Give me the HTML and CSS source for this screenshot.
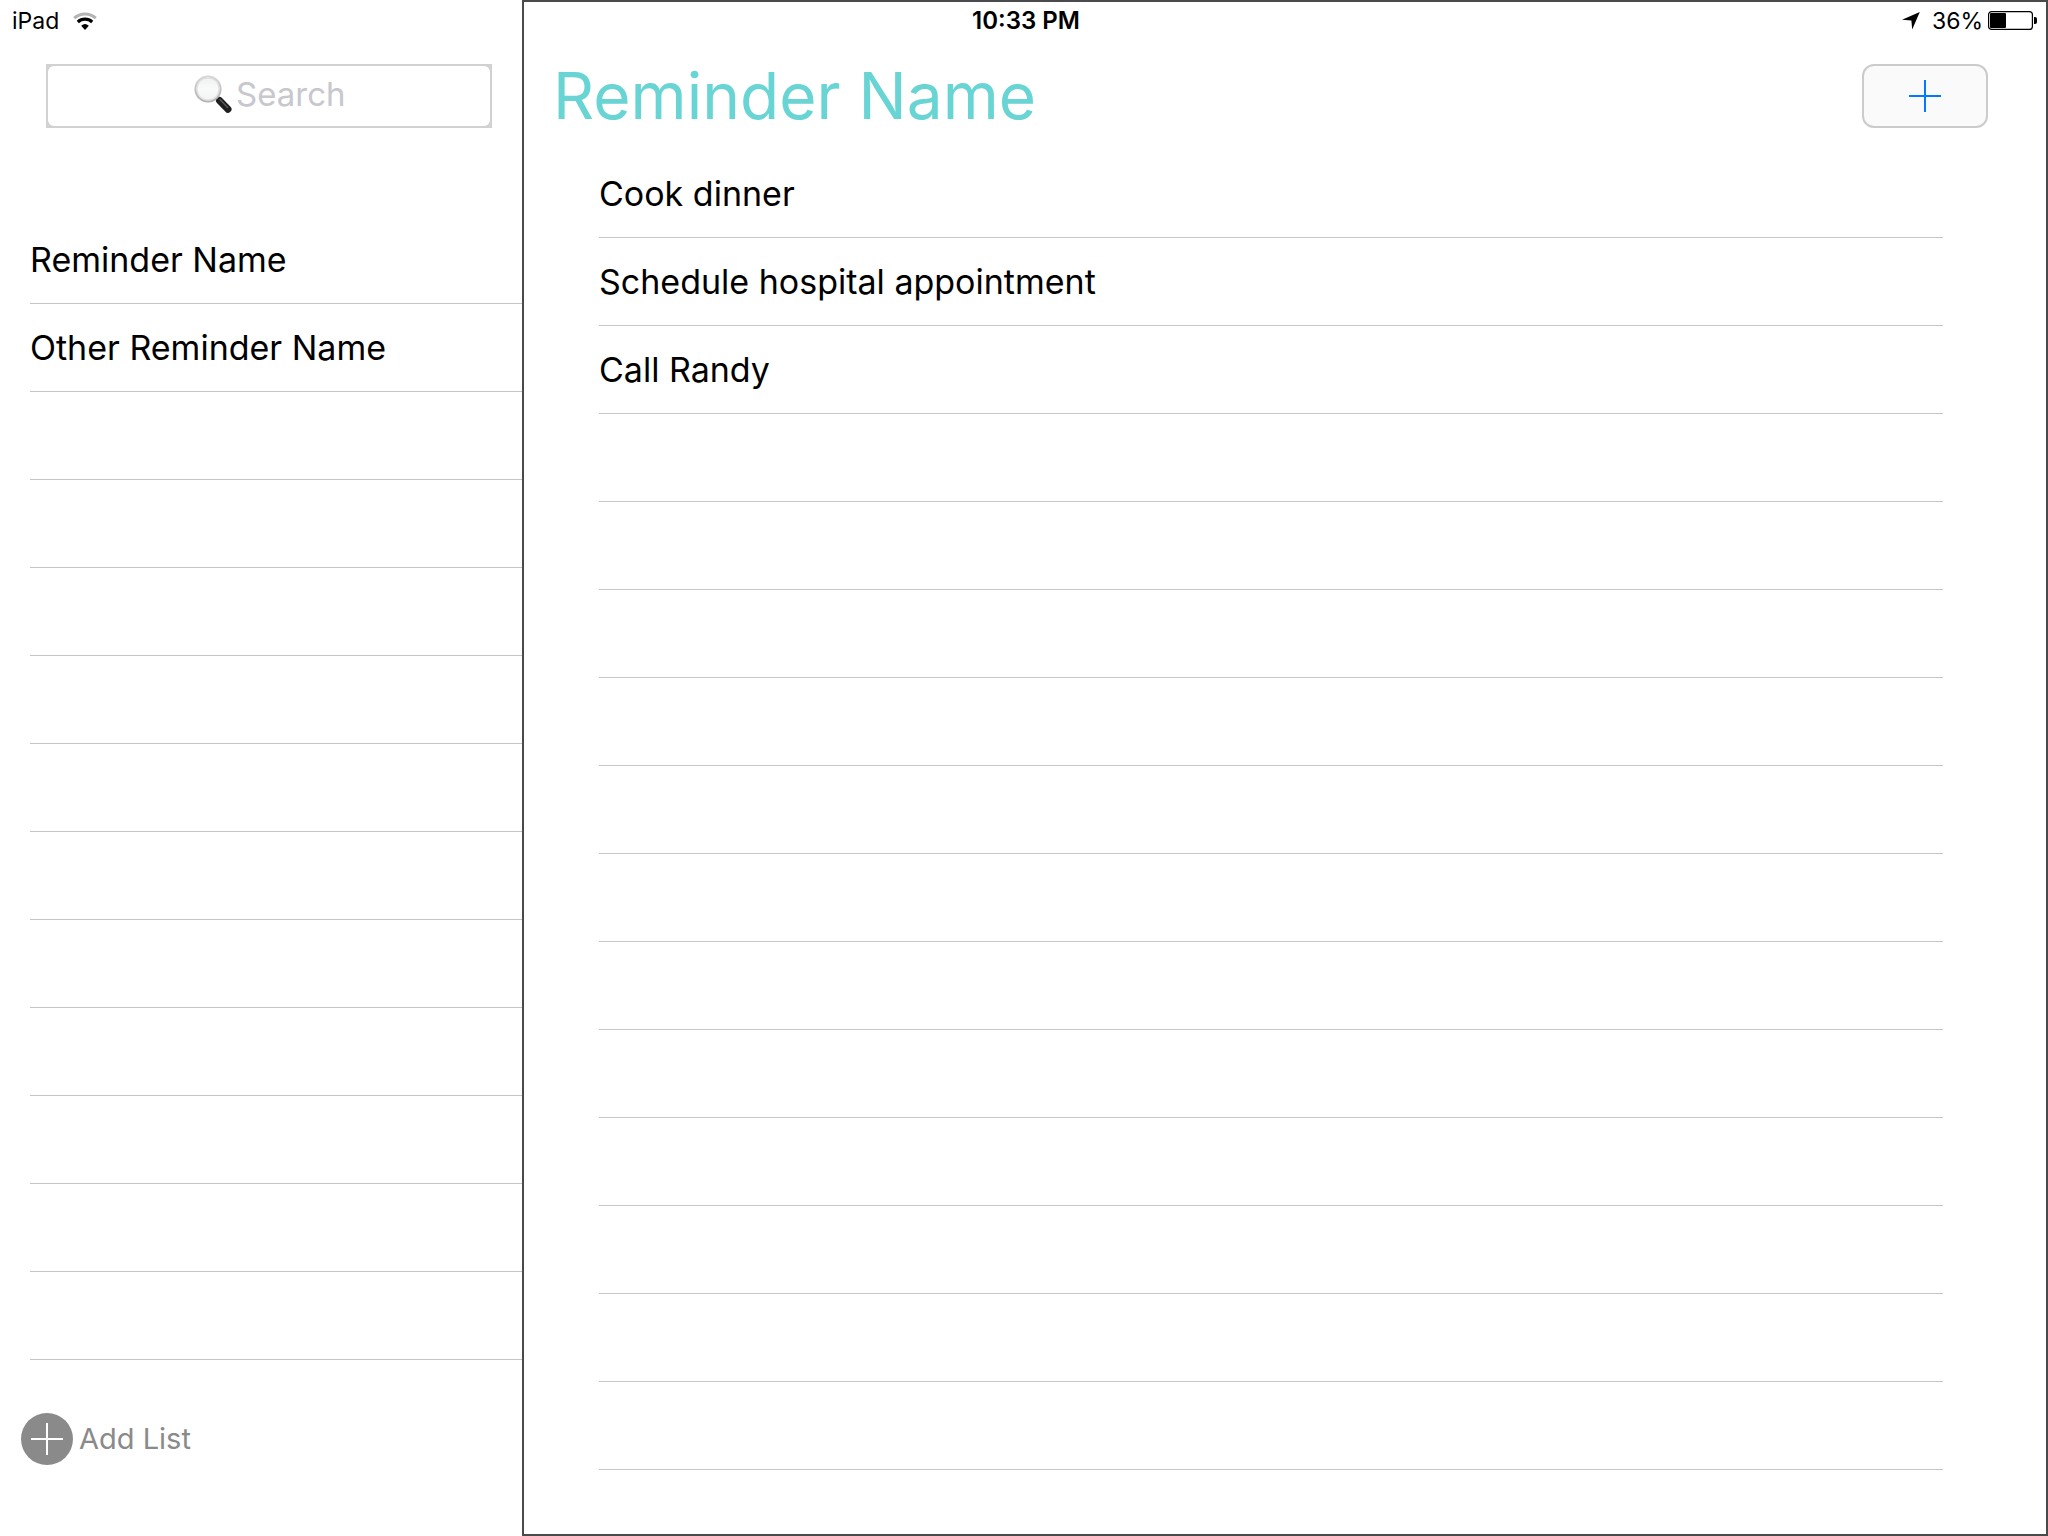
FILE: index.html
```html
<!DOCTYPE html>
<html lang="en">
<head>
<meta charset="utf-8">
<meta name="viewport" content="width=device-width, initial-scale=1">
<title>Reminders</title>
<link rel="stylesheet" href="styles.css">
</head>
<body class="app">
  <header class="status">
    <div class="status-left">
      <span>iPad</span>
      <svg class="wifi" width="24" height="18" viewBox="0 0 24 18" aria-hidden="true">
        <path d="M1.2 6.2A16 16 0 0 1 22.8 6.2" fill="none" stroke="#b4b4b4" stroke-width="3"/>
        <path d="M4.8 10A10.7 10.7 0 0 1 19.2 10" fill="none" stroke="#000" stroke-width="3.2"/>
        <path d="M12 18L8.2 13.7A5.7 5.7 0 0 1 15.8 13.7Z"/>
      </svg>
    </div>
    <time class="clock">10:33 PM</time>
    <div class="status-right">
      <svg class="arrow" width="18" height="18" viewBox="0 0 18 18" aria-hidden="true">
        <path d="M17.8 0L10.2 17.6L9.4 8.6L0 7.7Z"/>
      </svg>
      <span>36%</span>
      <svg class="battery" width="49" height="19" viewBox="0 0 49 19" aria-hidden="true">
        <rect x=".6" y=".6" width="43.8" height="17.8" rx="3" fill="none" stroke="#000" stroke-width="1.2"/>
        <rect x="2" y="2" width="16" height="15" rx="1"/>
        <path d="M46 6h1q2 0 2 2v3q0 2-2 2h-1z"/>
      </svg>
    </div>
  </header>

  <aside class="sidebar">
    <div class="search">
      <label class="search-field">
        <svg class="lens" width="38" height="38" viewBox="0 0 38 38" aria-hidden="true">
          <defs>
            <linearGradient id="glass" x1="0" y1="0" x2="0" y2="1">
              <stop offset="0" stop-color="#eeefef"/><stop offset=".5" stop-color="#f9fafa"/><stop offset="1" stop-color="#f1f3f3"/>
            </linearGradient>
            <linearGradient id="rim" x1="0" y1="0" x2="0" y2="1">
              <stop offset="0" stop-color="#d6d6d6"/><stop offset="1" stop-color="#b2b2b2"/>
            </linearGradient>
          </defs>
          <path d="M22 22L26 26" stroke="#8c8c8c" stroke-width="3"/>
          <path d="M25.5 25.5L34 34.3" stroke="#1f1f1f" stroke-width="7" stroke-linecap="round"/>
          <path d="M26 24.6L33.6 32.6" stroke="#5c5c5c" stroke-width="1.4" stroke-linecap="round"/>
          <circle cx="14" cy="14" r="12.6" fill="url(#glass)" stroke="url(#rim)" stroke-width="2"/>
          <circle cx="14" cy="14" r="11" fill="none" stroke="#dedede" stroke-width="1"/>
        </svg>
        <input class="search-input" type="text" placeholder="Search" aria-label="Search">
      </label>
    </div>
    <ul class="list">
      <li class="row">Reminder Name</li>
      <li class="row">Other Reminder Name</li>
      <li class="row"></li><li class="row"></li><li class="row"></li><li class="row"></li>
      <li class="row"></li><li class="row"></li><li class="row"></li><li class="row"></li>
      <li class="row"></li><li class="row"></li><li class="row"></li>
    </ul>
    <button class="add-list" type="button">
      <svg width="52" height="52" viewBox="0 0 52 52" aria-hidden="true">
        <circle cx="26" cy="26" r="26" fill="#8a8a8a"/>
        <path d="M26 10V42M10 26H42" stroke="#fff" stroke-width="2"/>
      </svg>
      <span>Add List</span>
    </button>
  </aside>

  <main class="panel">
    <div class="panel-head">
      <h1 class="title">Reminder Name</h1>
      <button class="add-item" type="button" aria-label="Add reminder">
        <svg width="32" height="32" viewBox="0 0 32 32" aria-hidden="true">
          <path d="M16 0V32M0 16H32" stroke="#007aff" stroke-width="2"/>
        </svg>
      </button>
    </div>
    <ul class="list items">
      <li class="row">Cook dinner</li>
      <li class="row">Schedule hospital appointment</li>
      <li class="row">Call Randy</li>
      <li class="row"></li><li class="row"></li><li class="row"></li><li class="row"></li>
      <li class="row"></li><li class="row"></li><li class="row"></li><li class="row"></li>
      <li class="row"></li><li class="row"></li><li class="row"></li><li class="row"></li>
    </ul>
  </main>
</body>
</html>
```
FILE: styles.css
```css
* {
  box-sizing: border-box;
}

.app {
  margin: 0;
  min-height: 100vh;
  display: grid;
  grid-template-columns: 522px 1fr;
  grid-template-rows: 41px 1fr;
  background: #fff;
  color: #000;
  font-family: Inter, "Liberation Sans", sans-serif;
}

/* The status bar shares its grid row with the top of the panel. */
.status {
  grid-area: 1 / 1 / 2 / 3;
  z-index: 1;
  display: grid;
  grid-template-columns: 1fr auto 1fr;
  align-items: center;
  padding: 0 8px 0 12px;
  font-size: 23px;
  line-height: 32px;
}

.status-left,
.status-right {
  display: flex;
  align-items: center;
}

.status-left {
  gap: 14px;
}

.status-right {
  justify-content: flex-end;
  padding-right: 3px;
}

.arrow {
  margin-right: 12px;
}

.battery {
  margin-left: 5px;
}

.clock {
  font-size: 24px;
  font-weight: 600;
}

.sidebar {
  grid-area: 2 / 1 / 3 / 2;
  display: flex;
  flex-direction: column;
  padding-top: 23px;
}

.search {
  height: 64px;
  margin: 0 30px 88px 46px;
  box-shadow: inset 0 0 0 2px #d1d1d1;
}

.search-field {
  display: flex;
  align-items: center;
  justify-content: center;
  gap: 4px;
  height: 100%;
  padding-bottom: 4px;
  border: 2px solid #d1d1d1;
  border-radius: 8px;
}

.search-input {
  width: 108px;
  padding: 0;
  border: 0;
  outline: 0;
  background: none;
  font: inherit;
  font-size: 33px;
  line-height: 40px;
}

.search-input::placeholder {
  color: #c7c7cd;
  opacity: 1;
}

.list {
  list-style: none;
  margin: 0;
  padding: 0 0 0 30px;
}

.row {
  display: flex;
  align-items: center;
  height: 88px;
  border-bottom: 1px solid #c6c6c6;
  font-size: 34px;
  line-height: 44px;
}

.add-list {
  display: flex;
  align-items: center;
  align-self: flex-start;
  gap: 6px;
  margin: 53px 0 0 21px;
  padding: 0;
  border: 0;
  background: none;
  color: #8a8a8a;
  font: inherit;
  font-size: 29px;
  line-height: 36px;
}

.panel {
  grid-area: 1 / 2 / 3 / 3;
  border: 2px solid #4a4a4c;
  padding-top: 62px;
}

.panel-head {
  display: flex;
  align-items: center;
  justify-content: space-between;
  height: 64px;
  margin-bottom: 22px;
  padding: 0 58px 0 29px;
}

.title {
  margin: 0;
  color: #68d4d4;
  font-size: 64px;
  font-weight: 400;
  line-height: 80px;
}

.add-item {
  display: flex;
  align-items: center;
  justify-content: center;
  width: 126px;
  height: 64px;
  padding: 0;
  border: 2px solid #cbcbcb;
  border-radius: 12px;
  background: #fafafa;
}

.items {
  padding: 0;
  margin: 0 103px 0 75px;
}
```
